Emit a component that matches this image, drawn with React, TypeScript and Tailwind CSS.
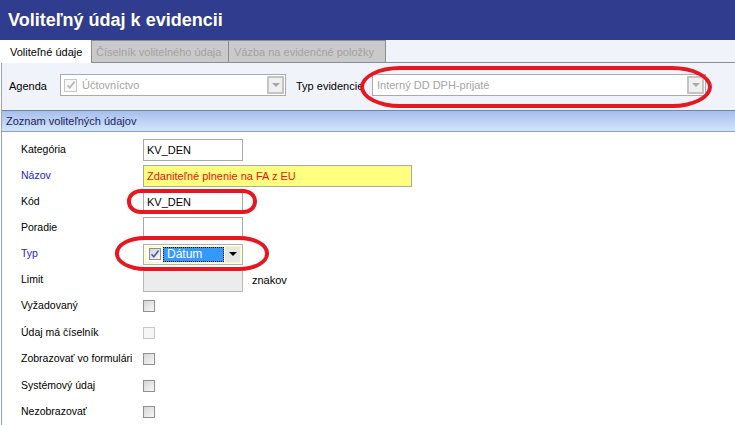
import type { ReactNode } from "react";

const Check = ({ disabled }: { disabled?: boolean }) => (
  <span
    className={`block w-3 h-3 border ${
      disabled
        ? "border-[#c8c8c8] bg-[#f6f6f6]"
        : "border-[#8e8f8f] bg-linear-to-br from-[#d6d6d6] to-[#f6f6f6]"
    }`}
  />
);

const Tick = ({ color }: { color: string }) => (
  <svg width="10" height="10" viewBox="0 0 10 10" className="block">
    <path d="M1.5 5.2 L3.8 7.8 L8.6 1.5" fill="none" stroke={color} strokeWidth="1.6" />
  </svg>
);

const Row = ({
  label,
  blue,
  tall,
  children,
}: {
  label: string;
  blue?: boolean;
  tall?: boolean;
  children?: ReactNode;
}) => (
  <div className={`flex items-center ${tall ? "h-[26.5px]" : "h-[26px]"}`}>
    <span
      className={`w-[141px] shrink-0 whitespace-nowrap pl-[19px] text-[10.5px] ${
        blue ? "text-[#2323d8]" : "text-black"
      }`}
    >
      {label}
    </span>
    {children}
  </div>
);

const Input = ({ value, wide, yellow }: { value?: string; wide?: boolean; yellow?: boolean }) => (
  <div
    className={`h-[22px] border border-[#a9a9a9] flex items-center pl-[3px] ${wide ? "w-[269px]" : "w-[100px]"} ${
      yellow ? "bg-[#ffff80] text-[#ee1111]" : "bg-white"
    }`}
  >
    {value}
  </div>
);

export default function App() {
  return (
    <div className="relative w-[735px] h-[425px] overflow-hidden bg-white font-['Liberation_Sans',Arial,sans-serif] text-[11px] text-black">
      {/* title */}
      <div className="h-10 bg-[#303c8e] flex items-center pl-2 pt-[1px] text-white font-bold text-[18px]">
        Voliteľný údaj k evidencii
      </div>

      {/* tabs */}
      <div className="flex h-[23px] bg-[#f0f4fa]">
        <div className="w-[91px] bg-white pl-[10px] pt-[4px]">Voliteľné údaje</div>
        <div className="flex flex-1 items-end border-b border-[#8c8c94]">
          <div className="h-[22px] w-[138px] bg-[#cacaca] border border-b-0 border-[#8c8c8c] text-[#a2a2a2] pl-[4px] pt-[3px]">
            Číselník volitelného údaja
          </div>
          <div className="h-[22px] w-[157px] bg-[#cacaca] border border-l-0 border-b-0 border-[#8c8c8c] text-[#a2a2a2] pl-[5px] pt-[3px]">
            Vázba na evidenčné položky
          </div>
        </div>
      </div>

      <div className="ml-[1px] border-l border-[#9aa2b4]">
        {/* agenda row */}
        <div className="h-[47px] bg-[#f0f4fa] flex items-start pt-[11px]">
          <span className="pl-[7px] w-[58px] mt-[4px]">Agenda</span>
          <div className="w-[226px] h-[22px] border border-[#ababab] bg-white flex items-center pl-[3px]">
            <span className="w-[13px] h-[13px] border border-[#c6c6c6] bg-[#f8f8f8] flex items-center justify-center">
              <Tick color="#b4b4b4" />
            </span>
            <span className="ml-[5px] text-[#a4a4a4] flex-1">Účtovníctvo</span>
            <span className="w-[17px] h-[18px] mr-px border-2 border-[#c4c4c4] bg-[#f0f0f0] flex items-center justify-center">
              <span className="w-0 h-0 border-x-[4px] border-x-transparent border-t-[4px] border-t-[#a8a8a8]" />
            </span>
          </div>
          <span className="ml-[10px] w-[76px] mt-[4px]">Typ evidencie</span>
          <div className="w-[334px] h-[22px] border border-[#ababab] bg-white flex items-center pl-[4px]">
            <span className="text-[#a4a4a4] flex-1">Interný DD DPH-prijaté</span>
            <span className="w-[17px] h-[18px] mr-px border-2 border-[#c4c4c4] bg-[#f0f0f0] flex items-center justify-center">
              <span className="w-0 h-0 border-x-[4px] border-x-transparent border-t-[4px] border-t-[#a8a8a8]" />
            </span>
          </div>
        </div>

        {/* section header */}
        <div className="h-[22px] border-y border-t-[#6c82b4] border-b-[#8aa0cc] bg-linear-to-b from-[#a6bfeb] to-[#d4e4fa] flex items-center pl-[4px] text-[#1e1e5e]">
          Zoznam voliteľných údajov
        </div>

        {/* form */}
        <div className="pt-[5px]">
          <Row label="Kategória">
            <Input value="KV_DEN" />
          </Row>
          <Row label="Názov" blue>
            <Input value="Zdaniteľné plnenie na FA z EU" wide yellow />
          </Row>
          <Row label="Kód">
            <Input value="KV_DEN" />
          </Row>
          <Row label="Poradie">
            <Input />
          </Row>
          <Row label="Typ" blue>
            <div className="w-[100px] h-[21px] border border-[#b0b0b0] bg-white p-px">
              <div className="h-full border border-[#ffff9c] flex items-center pl-[3px]">
                <span className="w-[12px] h-[12px] border border-[#8e8f8f] bg-linear-to-br from-[#d6d6d6] to-[#f6f6f6] flex items-center justify-center">
                  <Tick color="#4b5a9c" />
                </span>
                <span className="ml-[2px] w-[63px] h-[15px] bg-[#3399ff] border border-dotted border-black text-white flex items-center pl-[3px] text-[12px]">
                  Dátum
                </span>
                <span className="w-[15px] h-[15px] ml-px bg-[#e6e6e6] flex items-center justify-center">
                  <span className="w-0 h-0 border-x-[4px] border-x-transparent border-t-[4px] border-t-black" />
                </span>
              </div>
            </div>
          </Row>
          <Row label="Limit">
            <div className="w-[100px] h-[23px] border border-[#b8b8b8] bg-[#ececec]" />
            <span className="ml-[9px]">znakov</span>
          </Row>
          <Row label="Vyžadovaný" tall>
            <Check />
          </Row>
          <Row label="Údaj má číselník" tall>
            <Check disabled />
          </Row>
          <Row label="Zobrazovať vo formulári" tall>
            <Check />
          </Row>
          <Row label="Systémový údaj" tall>
            <Check />
          </Row>
          <Row label="Nezobrazovať" tall>
            <Check />
          </Row>
        </div>
      </div>

      {/* red annotation marks */}
      <div className="absolute left-[360px] top-[66px] w-[352px] h-[42px] border-[4px] border-[#e8161e] rounded-[40px/21px]" />
      <div className="absolute left-[127px] top-[189px] w-[130px] h-[25px] border-[4px] border-[#e8161e] rounded-[14px/12px]" />
      <div className="absolute left-[115px] top-[236px] w-[154px] h-[35px] border-[4px] border-[#e8161e] rounded-[30px/17px]" />
    </div>
  );
}
